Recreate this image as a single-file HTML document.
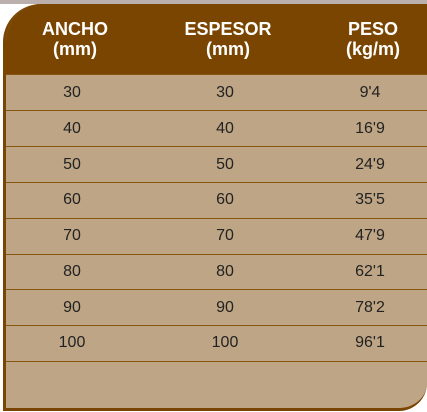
<!DOCTYPE html>
<html><head><meta charset="utf-8"><style>
body{margin:0;width:427px;height:412px;background:#fff;position:relative;overflow:hidden;font-family:"Liberation Sans",Arial,sans-serif}
.top{position:absolute;left:0;top:0;width:427px;height:4px;background:#bcb0ae}
.box{position:absolute;left:3px;top:4px;width:424px;height:407px;background:#bea585;border-left:3px solid #7a4500;border-bottom:3px solid #7a4500;border-top-left-radius:38px;border-bottom-right-radius:28px;box-sizing:border-box;overflow:hidden}
.head{position:absolute;left:0;top:0;width:100%;height:70px;background:#7a4500}
.h{position:absolute;top:15px;color:#fff;font-weight:bold;font-size:18px;line-height:20px;text-align:center;width:140px}
.line{position:absolute;left:0;width:100%;height:1px;background:#8a5510}
.c{position:absolute;font-size:16px;color:#222;width:100px;text-align:center}
</style></head><body>
<div class="top"></div>
<div class="box">
<div class="head"></div>
<div class="h" style="left:-1px">ANCHO<br>(mm)</div>
<div class="h" style="left:152px">ESPESOR<br>(mm)</div>
<div class="h" style="left:297px">PESO<br>(kg/m)</div>
<div class="line" style="top:70px"></div>
<div class="line" style="top:106px"></div>
<div class="line" style="top:142px"></div>
<div class="line" style="top:178px"></div>
<div class="line" style="top:214px"></div>
<div class="line" style="top:250px"></div>
<div class="line" style="top:285px"></div>
<div class="line" style="top:321px"></div>
<div class="line" style="top:357px"></div>
</div>
<div style="position:absolute;left:0;top:0">
<div class="c" style="left:22px;top:84px">30</div><div class="c" style="left:175px;top:84px">30</div><div class="c" style="left:320px;top:84px">9'4</div>
<div class="c" style="left:22px;top:120px">40</div><div class="c" style="left:175px;top:120px">40</div><div class="c" style="left:320px;top:120px">16'9</div>
<div class="c" style="left:22px;top:156px">50</div><div class="c" style="left:175px;top:156px">50</div><div class="c" style="left:320px;top:156px">24'9</div>
<div class="c" style="left:22px;top:191px">60</div><div class="c" style="left:175px;top:191px">60</div><div class="c" style="left:320px;top:191px">35'5</div>
<div class="c" style="left:22px;top:227px">70</div><div class="c" style="left:175px;top:227px">70</div><div class="c" style="left:320px;top:227px">47'9</div>
<div class="c" style="left:22px;top:263px">80</div><div class="c" style="left:175px;top:263px">80</div><div class="c" style="left:320px;top:263px">62'1</div>
<div class="c" style="left:22px;top:299px">90</div><div class="c" style="left:175px;top:299px">90</div><div class="c" style="left:320px;top:299px">78'2</div>
<div class="c" style="left:22px;top:334px">100</div><div class="c" style="left:175px;top:334px">100</div><div class="c" style="left:320px;top:334px">96'1</div>
</div>
</body></html>
